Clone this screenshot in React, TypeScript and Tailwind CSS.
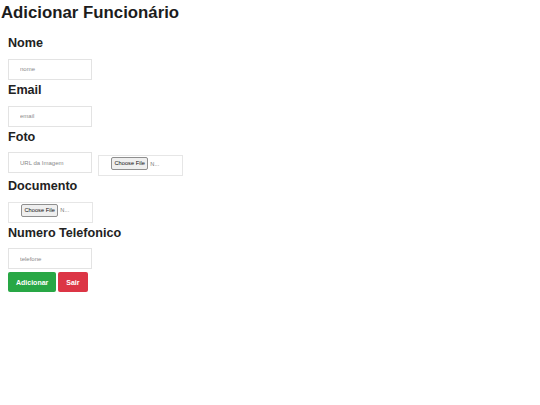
import React from "react";

const font = { fontFamily: '"Liberation Sans", Arial, sans-serif' };

function Field({ label, children }: { label: string; children: React.ReactNode }) {
  return (
    <div className="mb-[3px]">
      <div className="text-[12.6px] leading-[15px] font-bold text-[#222]">{label}</div>
      <div className="mt-[7.6px]">{children}</div>
    </div>
  );
}

function TextInput({ placeholder }: { placeholder: string }) {
  return (
    <input
      type="text"
      placeholder={placeholder}
      className="block w-[84px] h-[21px] border border-[#e3e3e3] bg-white pl-[11px] text-[6px] text-[#333] placeholder:text-[#8a8a8a] outline-none"
    />
  );
}

function FileBox({ className = "" }: { className?: string }) {
  return (
    <label
      className={`flex items-start w-[85px] h-[21px] border border-[#e6e6e6] bg-white pl-[12px] pt-[1px] cursor-pointer ${className}`}
    >
      <span className="h-[13px] px-[2.5px] flex items-center border border-[#8f8f8f] rounded-[2px] bg-[#efefef] text-[5.7px] text-[#111]">
        Choose File
      </span>
      <span className="ml-[2px] mt-[3.5px] text-[5.7px] leading-[6px] text-[#777]">N...</span>
      <input type="file" className="hidden" />
    </label>
  );
}

export default function App() {
  return (
    <div className="w-[540px] h-[405px] bg-white overflow-hidden" style={font}>
      <h1 className="pt-[3px] pl-[1px] text-[16.8px] leading-[20px] font-bold text-[#1c1c1c]">
        Adicionar Funcionário
      </h1>
      <form className="pl-2 mt-[13.4px]" onSubmit={(e) => e.preventDefault()}>
        <Field label="Nome">
          <TextInput placeholder="nome" />
        </Field>
        <Field label="Email">
          <TextInput placeholder="email" />
        </Field>
        <Field label="Foto">
          <div className="flex items-start gap-[6px]">
            <TextInput placeholder="URL da Imagem" />
            <FileBox className="mt-[3px]" />
          </div>
        </Field>
        <Field label="Documento">
          <FileBox className="w-[84px]" />
        </Field>
        <Field label="Numero Telefonico">
          <TextInput placeholder="telefone" />
        </Field>
        <div className="flex gap-[2px] mt-[1.5px]">
          <button
            type="submit"
            className="px-2 py-[5.3px] leading-[9px] text-[7px] font-bold text-white bg-[#28a745] rounded-[2px]"
          >
            Adicionar
          </button>
          <button
            type="button"
            className="px-2 py-[5.3px] leading-[9px] text-[7px] font-bold text-white bg-[#dc3545] rounded-[2px]"
          >
            Sair
          </button>
        </div>
      </form>
    </div>
  );
}
